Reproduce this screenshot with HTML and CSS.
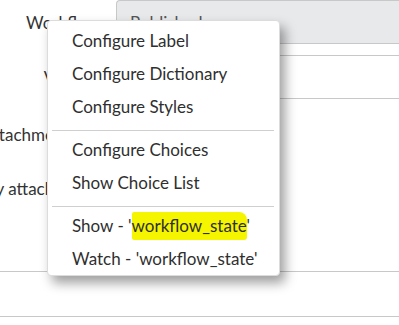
FILE: index.html
```html
<!DOCTYPE html>
<html lang="en">
<head>
    <meta charset="UTF-8">
    <meta name="viewport" content="width=device-width, initial-scale=1.0">
    <title>Knowledge - Context menu</title>
    <link rel="stylesheet" href="styles.css">
</head>
<body>
    <div class="form">
        <div class="form-row row-workflow">
            <div class="form-label">Workflow</div>
            <div class="form-control readonly">Published</div>
        </div>

        <div class="form-row row-source">
            <div class="form-label">Valid to</div>
            <div class="form-control"></div>
        </div>

        <div class="form-row row-check">
            <div class="form-label">Attachment link</div>
            <div class="form-control plain"></div>
        </div>

        <div class="form-row row-check">
            <div class="form-label">Display attachments</div>
            <div class="form-control plain"></div>
        </div>

        <div class="section-line first"></div>
        <div class="section-line"></div>
    </div>

    <ul class="context-menu">
        <li>Configure Label</li>
        <li>Configure Dictionary</li>
        <li>Configure Styles</li>
        <li class="divider"></li>
        <li>Configure Choices</li>
        <li>Show Choice List</li>
        <li class="divider"></li>
        <li>Show - '<span class="marker">workflow_state</span>'</li>
        <li>Watch - 'workflow_state'</li>
    </ul>
</body>
</html>
```

FILE: styles.css
```css
* {
    margin: 0;
    padding: 0;
    box-sizing: border-box;
}

body {
    font-family: Lato, 'Liberation Sans', sans-serif;
    font-size: 17px;
    color: #333;
    background: #fff;
    width: 399px;
    height: 325px;
    overflow: hidden;
    position: relative;
}

.form {
    display: flex;
    flex-direction: column;
}

.form-row {
    display: flex;
    align-items: center;
    height: 44px;
}

.form-label {
    width: 100px;
    flex-shrink: 0;
    display: flex;
    justify-content: flex-end;
    white-space: nowrap;
    color: #333;
}

.form-control {
    flex: 1;
    height: 44px;
    margin-left: 16px;
    border: 1px solid #c8c8c8;
    border-right: none;
    display: flex;
    align-items: center;
    padding-left: 13px;
    color: #555;
}

.form-control.readonly {
    background: #e8e9eb;
    border-radius: 4px 0 0 4px;
}

.form-control.plain {
    border: none;
}

.row-source {
    margin-top: 11px;
}

.row-check {
    margin-top: 13px;
}

.row-check + .row-check {
    margin-top: 10px;
}

.section-line {
    height: 1px;
    background: #c8c8c8;
}

.section-line.first {
    margin-top: 61px;
}

.section-line + .section-line {
    margin-top: 44px;
}

.context-menu {
    list-style: none;
    position: absolute;
    left: 47px;
    top: 20px;
    width: 233px;
    background: #fff;
    border: 1px solid #dcdcdc;
    border-radius: 4px;
    padding: 3px 0 0;
    box-shadow: 5px 7px 12px rgba(0, 0, 0, 0.38);
}

.context-menu li {
    height: 33px;
    line-height: 33px;
    padding-left: 24px;
    white-space: nowrap;
    color: #2f2f2f;
}

.context-menu li.divider {
    height: 1px;
    margin: 7px 5px 2px 4px;
    padding: 0;
    background: #cfcfcf;
}

.marker {
    background: #f5f500;
    padding: 3px 0 4px;
    border-radius: 2px 8px 3px 2px;
}
```
